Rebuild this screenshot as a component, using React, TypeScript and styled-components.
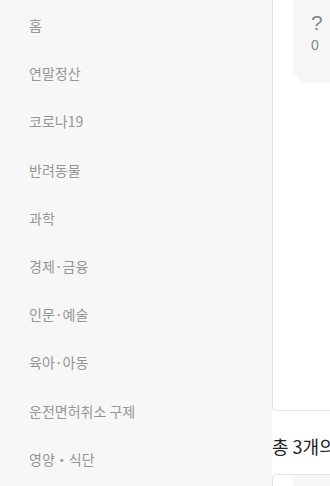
import React from 'react'
import styled, { createGlobalStyle } from 'styled-components'

const GlobalStyle = createGlobalStyle`
    html, body {
        margin     : 0;
        padding    : 0;
        height     : 100%;
        overflow   : hidden;
        background : #ffffff;
    }
    body {
        font-family : "Noto Sans CJK KR", "Liberation Sans", sans-serif;
    }
    #root {
        height : 100%;
    }
`

const categories = [
    '홈',
    '연말정산',
    '코로나19',
    '반려동물',
    '과학',
    '경제·금융',
    '인문·예술',
    '육아·아동',
    '운전면허취소 구제',
    '영양・식단',
]

const App = () => {
    return (
        <>
            <GlobalStyle />
            <Layout>
                <Sidebar>
                    {categories.map((name, i) => (
                        <MenuItem key={i}>{name}</MenuItem>
                    ))}
                </Sidebar>
                <Main>
                    <Card $topless>
                        <StatBox>
                            <StatIcon>?</StatIcon>
                            <StatCount>0</StatCount>
                        </StatBox>
                    </Card>
                    <Total>총 3개의 질문</Total>
                    <Card>
                        <StatBox />
                    </Card>
                </Main>
            </Layout>
        </>
    )
}

export default App

const Layout = styled.div`
    display  : flex;
    height   : 100%;
    overflow : hidden;
`

const Sidebar = styled.nav`
    flex           : 0 0 272px;
    width          : 272px;
    height         : 100%;
    padding-top    : 1px;
    box-sizing     : border-box;
    background     : #f7f7f7;
    display        : flex;
    flex-direction : column;
`

const MenuItem = styled.div`
    padding     : 14px 0 14px 29px;
    line-height : 20.2px;
    font-size   : 14px;
    color       : #959595;
    white-space : nowrap;
    cursor      : pointer;
`

const Main = styled.main`
    flex           : 0 0 640px;
    width          : 640px;
    display        : flex;
    flex-direction : column;
`

const Card = styled.div<{ $topless?: boolean }>`
    height        : ${p => (p.$topless ? '410px' : '200px')};
    flex-shrink   : 0;
    border        : 1px solid #e2e2e2;
    border-top    : ${p => (p.$topless ? 'none' : '1px solid #e2e2e2')};
    border-radius : ${p => (p.$topless ? '0 0 4px 4px' : '4px')};
    background    : #ffffff;
    padding-left  : 20px;
`

const StatBox = styled.div`
    height        : 83px;
    padding       : 11px 0 0 18px;
    box-sizing    : border-box;
    background    : #f6f6f6;
    border-radius : 0 0 0 16px;
    font-family   : "Liberation Sans", "Noto Sans CJK KR", sans-serif;
    color         : #85878d;
`

const StatIcon = styled.div`
    font-size   : 21px;
    line-height : 24px;
`

const StatCount = styled.div`
    font-size   : 14px;
    line-height : 20px;
`

const Total = styled.div`
    margin      : 22px 0 15px 0;
    font-size   : 18px;
    line-height : 26px;
    color       : #222;
    white-space : nowrap;
`
